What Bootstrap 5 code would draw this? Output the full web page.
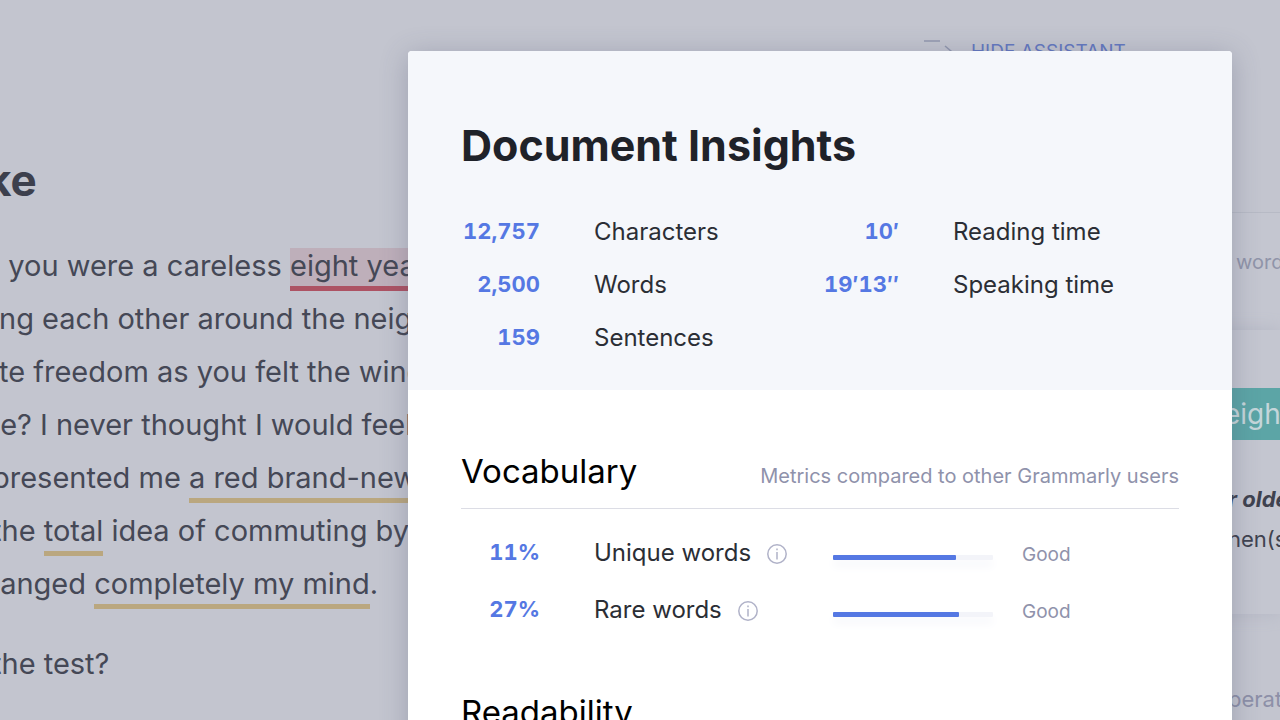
<!DOCTYPE html>
<html lang="en">
<head>
<meta charset="utf-8">
<meta name="viewport" content="width=device-width, initial-scale=1">
<title>Document Insights</title>
<link href="https://cdn.jsdelivr.net/npm/bootstrap@5.3.0/dist/css/bootstrap.min.css" rel="stylesheet">
<style>
  body { font-family: Inter, "Liberation Sans", sans-serif; background: #c3c5cf; color: #454856; }
  .workspace { min-height: 100vh; }
  .editor { margin-left: -8px; padding-top: 154px; font-size: 29px; line-height: 53px; }
  .editor h1 { font-size: 44px; line-height: 53px; font-weight: 700; color: #3d404d; margin: 0 0 32px -6px; }
  .editor p { margin-bottom: 27px; }
  .hint { padding-bottom: 3px; border-bottom: 5px solid #baa77f; }
  .hint-error { background: #beafba; border-color: #ad5263; }
  .assistant { width: 360px; }
  .assistant-top { height: 212px; padding-top: 38px; }
  .hide-btn { font-size: 19px; line-height: 28px; color: #6478c0; gap: 18px; padding: 0 0 0 4px; border: 0; background: none; }
  .clipped { padding-left: 308px; }
  .word-count { height: 118px; line-height: 98px; font-size: 20px; padding-left: 316px; color: #9094a9; border-top: 1px solid #b7bac5; background: #c4c6d0; }
  .hint-card { padding: 58px 0 55px; background: #c4c6d0; box-shadow: 0 0 16px #b4b7c4; font-size: 22px; line-height: 40px; color: #3f424f; }
  .replacement { height: 52px; line-height: 52px; margin-bottom: 39px; padding-left: 304px; font-size: 28px; color: #c5d6da; background: #5ca5a6; }
  .next-hint { padding-top: 65px; font-size: 22px; line-height: 40px; color: #8d90a8; }
  .overlay { padding: 51px 48px 0 0; }
  .insights { width: 824px; max-width: 100%; min-height: 720px; border-radius: 4px; background: #fff; color: #2b2e35; font-size: 24px; box-shadow: 0 4px 28px rgba(70, 75, 105, .3); }
  .insights-head { background: #f5f7fb; border-radius: 4px 4px 0 0; padding: 66px 53px 26px; }
  .insights-head h2 { font-size: 43px; line-height: 56px; font-weight: 700; color: #1f2229; margin-bottom: 32px; }
  .stat { line-height: 53px; gap: 54px; }
  .figure-value { width: 79px; font-size: 22px; font-weight: 700; color: #5578e3; font-variant-numeric: tabular-nums; }
  .insights-body { padding: 55px 53px 0; }
  .section-head { height: 64px; margin-bottom: 15px; color: #000; border-bottom: 1px solid #dcdde5; }
  .section-head h3 { font-size: 33px; line-height: 52px; font-weight: 400; }
  .note { font-size: 20px; color: #8f92ab; }
  .metric { line-height: 57px; }
  .metric .note { font-size: 19px; line-height: 53px; padding-top: 3px; }
  .metric-name { width: 239px; margin-left: 54px; }
  .meter { width: 160px; height: 5px; border-radius: 1px; margin: 10px 29px 0 0; overflow: visible; background: #f3f4f9; box-shadow: 0 6px 10px #f3f4f9; }
  .meter .progress-bar { background: #5578e3; border-radius: 1px; }
  .info-btn { width: 22px; height: 22px; padding: 0; border: 0; background: none; color: #b0b2c8; margin-left: 15px; margin-top: 2px; }
</style>
</head>
<body>
<div class="workspace vh-100 position-relative overflow-hidden">
  <div class="d-flex h-100 text-nowrap">
    <main class="editor flex-grow-1 overflow-hidden">
      <h1>ke</h1>
      <p>&nbsp; you were a careless <span class="hint hint-error">eight years</span><br>
        ing each other around the neigh<br>
        ite freedom as you felt the wind<br>
        &nbsp;e? I never thought I would feel<br>
        presented me <span class="hint">a red brand-new</span><br>
        the <span class="hint">total</span> idea of commuting by<br>
        &nbsp;anged <span class="hint">completely my mind</span>.</p>
      <p>the test?</p>
    </main>
    <aside class="assistant flex-shrink-0 overflow-hidden">
      <div class="assistant-top">
        <button type="button" class="hide-btn d-flex align-items-start">
          <svg width="29" height="26" viewBox="0 0 29 26" fill="none" stroke="#9298ae" stroke-width="1.5" aria-hidden="true"><path d="M0 3h16M21 8l7 6-7 6M0 14h28"/></svg>
          HIDE ASSISTANT
        </button>
      </div>
      <div class="word-count">words</div>
      <div class="hint-card">
        <div class="replacement">eight</div>
        <div class="clipped"><em class="fw-bold">r older</em></div>
        <div class="clipped">hen(s)</div>
      </div>
      <div class="next-hint clipped">perated</div>
    </aside>
  </div>

  <div class="overlay position-absolute top-0 start-0 w-100 d-flex justify-content-end">
    <section class="insights" role="dialog" aria-labelledby="insights-title">
      <header class="insights-head">
        <h2 id="insights-title">Document Insights</h2>
        <div class="row g-0">
          <div class="col-6">
            <div class="stat d-flex"><span class="figure-value text-end">12,757</span><span>Characters</span></div>
            <div class="stat d-flex"><span class="figure-value text-end">2,500</span><span>Words</span></div>
            <div class="stat d-flex"><span class="figure-value text-end">159</span><span>Sentences</span></div>
          </div>
          <div class="col-6">
            <div class="stat d-flex"><span class="figure-value text-end">10′</span><span>Reading time</span></div>
            <div class="stat d-flex"><span class="figure-value text-end">19′13″</span><span>Speaking time</span></div>
          </div>
        </div>
      </header>
      <div class="insights-body">
        <div class="section-head d-flex justify-content-between align-items-baseline">
          <h3>Vocabulary</h3><span class="note">Metrics compared to other Grammarly users</span>
        </div>
        <div class="metric d-flex align-items-center">
          <span class="figure-value text-end">11%</span>
          <span class="metric-name d-flex align-items-center">Unique words
            <button type="button" class="info-btn d-flex" aria-label="About unique words"><svg width="22" height="22" viewBox="0 0 22 22" fill="none" stroke="currentColor" stroke-width="1.5" aria-hidden="true"><circle cx="11" cy="11" r="9.2"/><path d="M11 9v7.5M11 5.5v1.8"/></svg></button></span>
          <div class="progress meter"><div class="progress-bar" style="width: 77%"></div></div>
          <span class="note">Good</span>
        </div>
        <div class="metric d-flex align-items-center">
          <span class="figure-value text-end">27%</span>
          <span class="metric-name d-flex align-items-center">Rare words
            <button type="button" class="info-btn d-flex" aria-label="About rare words"><svg width="22" height="22" viewBox="0 0 22 22" fill="none" stroke="currentColor" stroke-width="1.5" aria-hidden="true"><circle cx="11" cy="11" r="9.2"/><path d="M11 9v7.5M11 5.5v1.8"/></svg></button></span>
          <div class="progress meter"><div class="progress-bar" style="width: 79%"></div></div>
          <span class="note">Good</span>
        </div>
        <div class="section-head d-flex mt-5"><h3>Readability</h3></div>
      </div>
    </section>
  </div>
</div>
<script src="https://cdn.jsdelivr.net/npm/bootstrap@5.3.0/dist/js/bootstrap.bundle.min.js"></script>
</body>
</html>
